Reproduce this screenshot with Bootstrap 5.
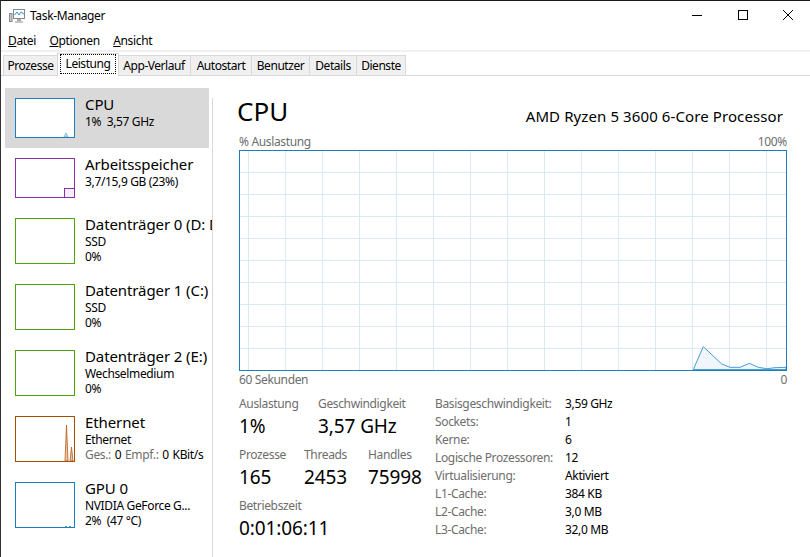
<!DOCTYPE html>
<html lang="de">
<head>
  <meta charset="UTF-8" />
  <meta name="viewport" content="width=device-width, initial-scale=1.0" />
  <title>Task-Manager</title>
  <link href="https://cdn.jsdelivr.net/npm/bootstrap@5.3.0/dist/css/bootstrap.min.css" rel="stylesheet" />
  <style>
    html, body { height: 100%; }
    body {
      font-family: "Noto Sans", "Open Sans", sans-serif;
      font-size: 12px;
      line-height: 16px;
      letter-spacing: -0.35px;
      color: #000;
      background: #fff;
      overflow: hidden;
    }
    .tm-window { height: 557px; border-top: 1px solid #1a1a1a; border-left: 1px solid #333; }
    .tm-title { height: 30px; padding-left: 8px; gap: 5px; }
    .tm-controls { gap: 35.5px; padding-right: 17px; margin-top: -2px; }
    .tm-menu { height: 18px; padding: 1px 0 0 7px; gap: 13.5px; border-bottom: 2px solid #f0f0f0; box-sizing: content-box; }
    .tm-tabs { height: 23px; padding-left: 2px; border-bottom: 1px solid #d9d9d9; box-sizing: content-box; grid-template-columns: 55px 60px 73px 61px 58px 47px 49px; justify-content: start; letter-spacing: -0.45px; }
    .tm-tab { margin-top: 3px; height: 20px; background: #f0f0f0; border: 1px solid #d9d9d9; border-bottom: 0; border-left-width: 0; display: flex; align-items: center; justify-content: center; }
    .tm-tab:first-child { border-left-width: 1px; }
    .tm-tab-on { margin: 1px -1px 0 -1px; height: 23px; background: #fff; padding: 0 2px 2px; position: relative; z-index: 1; border-left-width: 1px; }
    .tm-tab-on span { border: 1px dotted #000; width: 100%; text-align: center; padding: 1px 0; line-height: 16px; }
    .tm-main { height: 481px; }
    .tm-side { width: 212px; padding: 12px 0 0 4px; position: relative; overflow: hidden; }
    .tm-divider { position: absolute; right: 0; top: 22px; bottom: 0; width: 1px; background: #d9d9d9; }
    .tm-item { width: 204px; height: 66px; padding: 10px 0 0 10px; gap: 10px; white-space: nowrap; }
    .tm-item-short { height: 60px; }
    .tm-item-on { background: #d9d9d9; }
    .tm-thumb { width: 60px; height: 46px; flex: none; background: #fff; display: block; }
    .tm-item-short .tm-thumb { height: 40px; }
    .tm-name { font-size: 15px; line-height: 20px; margin-top: -4px; letter-spacing: -0.1px; }
    .tm-sub { line-height: 15px; }
    .tm-sub-wide { word-spacing: 1px; }
    .tm-mute { color: #6d6d6d; }
    .tm-content { padding: 0 0 0 26px; width: 573px; }
    .tm-head { height: 58px; padding-top: 18px; }
    .tm-head-cpu { font-size: 26px; line-height: 34px; letter-spacing: 0; margin-left: -2px; }
    .tm-head-model { font-size: 15px; line-height: 20px; margin-right: 3px; margin-top: 12px; letter-spacing: 0.1px; }
    .tm-axis { height: 16px; width: 548px; color: #6d6d6d; }
    .tm-axis-low { margin-top: 1px; }
    .tm-chart { display: block; width: 548px; height: 221px; }
    .tm-stats { margin-top: 8px; width: 548px; }
    .tm-left { width: 196px; flex: none; }
    .tm-val { font-size: 19px; line-height: 24px; margin-top: 2px; letter-spacing: -0.1px; white-space: nowrap; }
    .tm-stat-row { height: 51px; }
    .tm-col-a { width: 79px; }
    .tm-col-b { width: 65px; }
    .tm-col-c { width: 64px; }
    .tm-info-row { height: 18px; display: flex; }
    .tm-info-key { width: 130px; color: #6d6d6d; }
  </style>
</head>
<body>
  <div class="tm-window d-flex flex-column">
    <!-- Title bar -->
    <div class="tm-title d-flex align-items-center">
      <svg width="16" height="14" viewBox="0 0 16 14">
        <rect x="0.5" y="4.5" width="2.5" height="8" fill="#c9c9c9" stroke="#8a8a8a" />
        <rect x="4.5" y="0.5" width="11" height="9" fill="#fff" stroke="#7f8c96" />
        <polyline points="5.5,6 8,3 10,6 12,3 15,5" fill="none" stroke="#3a8fc8" />
        <rect x="8" y="10" width="4" height="2" fill="#a9a9a9" />
        <rect x="6" y="12" width="8" height="2" fill="#c4c4c4" />
      </svg>
      <span class="flex-grow-1">Task-Manager</span>
      <div class="tm-controls d-flex align-items-center">
        <svg width="10" height="10" viewBox="0 0 10 10"><path d="M0 5.5H10" stroke="#000" /></svg>
        <svg width="10" height="10" viewBox="0 0 10 10"><rect x="0.5" y="0.5" width="9" height="9" fill="none" stroke="#000" /></svg>
        <svg width="10" height="10" viewBox="0 0 10 10"><path d="M0 0L10 10M10 0L0 10" stroke="#000" /></svg>
      </div>
    </div>

    <!-- Menu -->
    <div class="tm-menu d-flex align-items-center">
      <span><u>D</u>atei</span>
      <span><u>O</u>ptionen</span>
      <span><u>A</u>nsicht</span>
    </div>

    <!-- Tabs -->
    <div class="tm-tabs d-grid align-items-start">
      <div class="tm-tab">Prozesse</div>
      <div class="tm-tab tm-tab-on"><span>Leistung</span></div>
      <div class="tm-tab">App-Verlauf</div>
      <div class="tm-tab">Autostart</div>
      <div class="tm-tab">Benutzer</div>
      <div class="tm-tab">Details</div>
      <div class="tm-tab">Dienste</div>
    </div>

    <div class="tm-main d-flex">
      <!-- Sidebar -->
      <div class="tm-side">
        <div class="tm-divider"></div>
        <div class="tm-item tm-item-short tm-item-on d-flex">
          <svg class="tm-thumb" viewBox="0 0 60 40">
            <polygon points="49,39 51,35 53,39" fill="#d6e6f2" stroke="#5a9fcc" stroke-width="0.7" />
            <rect x="0.5" y="0.5" width="59" height="39" fill="none" stroke="#1b7fbf" />
          </svg>
          <div>
            <div class="tm-name">CPU</div>
            <div class="tm-sub">1%&nbsp; 3,57 GHz</div>
          </div>
        </div>
        <div class="tm-item tm-item-short d-flex">
          <svg class="tm-thumb" viewBox="0 0 60 40">
            <rect x="49.5" y="30.5" width="10" height="9" fill="#f3eef6" stroke="#8b2fa8" />
            <rect x="0.5" y="0.5" width="59" height="39" fill="none" stroke="#8b2fa8" />
          </svg>
          <div>
            <div class="tm-name">Arbeitsspeicher</div>
            <div class="tm-sub">3,7/15,9 GB (23%)</div>
          </div>
        </div>
        <div class="tm-item d-flex">
          <svg class="tm-thumb" viewBox="0 0 60 46"><rect x="0.5" y="0.5" width="59" height="45" fill="none" stroke="#4ea40a" /></svg>
          <div>
            <div class="tm-name">Datenträger 0 (D: D</div>
            <div class="tm-sub">SSD</div>
            <div class="tm-sub">0%</div>
          </div>
        </div>
        <div class="tm-item d-flex">
          <svg class="tm-thumb" viewBox="0 0 60 46"><rect x="0.5" y="0.5" width="59" height="45" fill="none" stroke="#4ea40a" /></svg>
          <div>
            <div class="tm-name">Datenträger 1 (C:)</div>
            <div class="tm-sub">SSD</div>
            <div class="tm-sub">0%</div>
          </div>
        </div>
        <div class="tm-item d-flex">
          <svg class="tm-thumb" viewBox="0 0 60 46"><rect x="0.5" y="0.5" width="59" height="45" fill="none" stroke="#4ea40a" /></svg>
          <div>
            <div class="tm-name">Datenträger 2 (E:)</div>
            <div class="tm-sub">Wechselmedium</div>
            <div class="tm-sub">0%</div>
          </div>
        </div>
        <div class="tm-item d-flex">
          <svg class="tm-thumb" viewBox="0 0 60 46">
            <polygon points="50,45 51.5,9 53,45" fill="#e9c4a6" stroke="#b85c1c" stroke-width="0.8" />
            <polygon points="55,45 56.5,31 58,45" fill="#e9c4a6" stroke="#b85c1c" stroke-width="0.8" />
            <rect x="0.5" y="0.5" width="59" height="45" fill="none" stroke="#a74f01" />
          </svg>
          <div>
            <div class="tm-name">Ethernet</div>
            <div class="tm-sub">Ethernet</div>
            <div class="tm-sub tm-sub-wide"><span class="tm-mute">Ges.:</span> 0 <span class="tm-mute">Empf.:</span> 0 KBit/s</div>
          </div>
        </div>
        <div class="tm-item d-flex">
          <svg class="tm-thumb" viewBox="0 0 60 46">
            <path d="M50 44.5h2M54 44.5h2" stroke="#5a9fcc" />
            <rect x="0.5" y="0.5" width="59" height="45" fill="none" stroke="#1b7fbf" />
          </svg>
          <div>
            <div class="tm-name">GPU 0</div>
            <div class="tm-sub">NVIDIA GeForce G...</div>
            <div class="tm-sub">2%&nbsp; (47 °C)</div>
          </div>
        </div>
      </div>

      <!-- Content -->
      <div class="tm-content">
        <div class="tm-head d-flex justify-content-between align-items-start">
          <div class="tm-head-cpu">CPU</div>
          <div class="tm-head-model">AMD Ryzen 5 3600 6-Core Processor</div>
        </div>
        <div class="tm-axis d-flex justify-content-between"><span>% Auslastung</span><span>100%</span></div>
        <svg class="tm-chart" viewBox="0 0 548 221">
          <defs>
            <pattern id="cpuGrid" x="9" y="22" width="37" height="22" patternUnits="userSpaceOnUse">
              <path d="M0.5 0V22M0 0.5H37" fill="none" stroke="#d9eaf4" />
            </pattern>
          </defs>
          <rect x="1" y="1" width="546" height="219" fill="url(#cpuGrid)" />
          <polygon points="454.3,219.5 464.3,196.7 482.7,214 491,217.3 501,217.3 510.3,213.3 519.3,217.3 527.7,218.7 536,217.7 547,217.3 547,219.5" fill="#f1f6fa" stroke="#4a9ccf" stroke-width="1" />
          <rect x="0.5" y="0.5" width="547" height="220" fill="none" stroke="#1b7fbf" />
        </svg>
        <div class="tm-axis tm-axis-low d-flex justify-content-between"><span>60 Sekunden</span><span>0</span></div>

        <div class="tm-stats d-flex">
          <div class="tm-left">
            <div class="tm-stat-row d-flex">
              <div class="tm-col-a"><div class="tm-mute">Auslastung</div><div class="tm-val">1%</div></div>
              <div><div class="tm-mute">Geschwindigkeit</div><div class="tm-val">3,57 GHz</div></div>
            </div>
            <div class="tm-stat-row d-flex">
              <div class="tm-col-b"><div class="tm-mute">Prozesse</div><div class="tm-val">165</div></div>
              <div class="tm-col-c"><div class="tm-mute">Threads</div><div class="tm-val">2453</div></div>
              <div><div class="tm-mute">Handles</div><div class="tm-val">75998</div></div>
            </div>
            <div class="tm-stat-row">
              <div class="tm-mute">Betriebszeit</div>
              <div class="tm-val">0:01:06:11</div>
            </div>
          </div>
          <div>
            <div class="tm-info-row"><span class="tm-info-key">Basisgeschwindigkeit:</span><span>3,59 GHz</span></div>
            <div class="tm-info-row"><span class="tm-info-key">Sockets:</span><span>1</span></div>
            <div class="tm-info-row"><span class="tm-info-key">Kerne:</span><span>6</span></div>
            <div class="tm-info-row"><span class="tm-info-key">Logische Prozessoren:</span><span>12</span></div>
            <div class="tm-info-row"><span class="tm-info-key">Virtualisierung:</span><span>Aktiviert</span></div>
            <div class="tm-info-row"><span class="tm-info-key">L1-Cache:</span><span>384 KB</span></div>
            <div class="tm-info-row"><span class="tm-info-key">L2-Cache:</span><span>3,0 MB</span></div>
            <div class="tm-info-row"><span class="tm-info-key">L3-Cache:</span><span>32,0 MB</span></div>
          </div>
        </div>
      </div>
    </div>
  </div>
  <script src="https://cdn.jsdelivr.net/npm/bootstrap@5.3.0/dist/js/bootstrap.bundle.min.js"></script>
</body>
</html>
